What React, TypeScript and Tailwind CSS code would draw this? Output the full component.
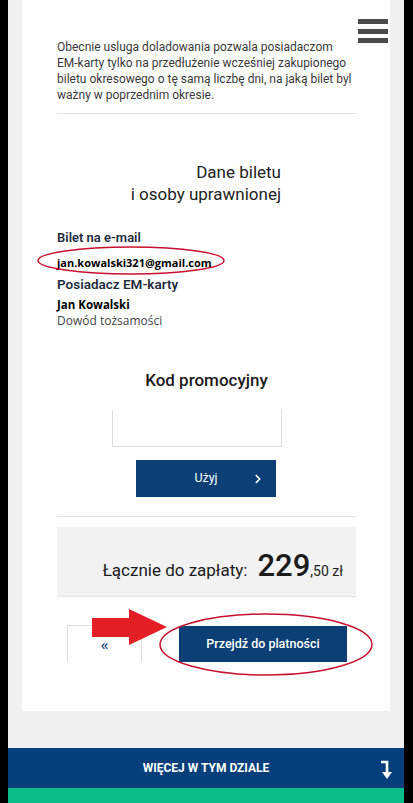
import { ChevronRight } from "lucide-react";

const roboto = "font-['Roboto',sans-serif]";
const openSans = "font-['Open_Sans',sans-serif]";

function Hamburger() {
  return (
    <div className="absolute right-[2px] top-[19px] flex flex-col gap-[4.5px]">
      <span className="block h-[5px] w-[30px] bg-[#4a4a4a]" />
      <span className="block h-[5px] w-[30px] bg-[#4a4a4a]" />
      <span className="block h-[5px] w-[30px] bg-[#4a4a4a]" />
    </div>
  );
}

function TicketDetails() {
  return (
    <div className="flex flex-col">
      <div className={`${roboto} mt-[23px] text-[13px] font-semibold leading-[20px] text-[#1f2d3d]`}>
        Bilet na e-mail
      </div>
      <div className={`${openSans} mt-[5px] text-[11px] font-bold leading-[20px] text-black`}>
        jan.kowalski321@gmail.com
      </div>
      <div className={`${roboto} mt-[1px] text-[13.5px] font-semibold leading-[20px] text-[#1f2d3d]`}>
        Posiadacz EM-karty
      </div>
      <div className={`${openSans} mt-[3px] text-[11.5px] font-bold leading-[16px] text-black`}>
        Jan Kowalski
      </div>
      <div className={`${openSans} text-[12px] leading-[16px] text-[#444]`}>
        Dowód tożsamości
      </div>
    </div>
  );
}

function PromoCode() {
  return (
    <div className="flex flex-col">
      <h3 className={`${roboto} mt-[40px] text-center text-[17px] font-medium leading-[22px] text-[#1b1b1b]`}>
        Kod promocyjny
      </h3>
      <input
        className="ml-[55px] mt-[19px] h-[37px] w-[170px] border border-t-0 border-[#dcdcdc] bg-white outline-none"
        aria-label="Kod promocyjny"
      />
      <button className={`${roboto} relative ml-[79px] mt-[13px] flex h-[37px] w-[140px] items-center justify-center bg-[#0b3f75] text-[12.5px] text-white`}>
        Użyj
        <ChevronRight className="absolute right-[11px] top-1/2 -translate-y-1/2" size={14} strokeWidth={3} />
      </button>
    </div>
  );
}

function Total() {
  return (
    <div className={`${roboto} mt-[10px] flex h-[70px] items-baseline justify-end border-b border-[#e2e2e2] bg-[#f2f2f2] pr-[13px] pt-[19px] text-[#1b1b1b]`}>
      <span className="mr-[10px] text-[17px]">Łącznie do zapłaty:</span>
      <span className="text-[31px] font-medium leading-[40px]">229</span>
      <span className="text-[14px]">,50 zł</span>
    </div>
  );
}

function Annotations() {
  return (
    <svg className="pointer-events-none absolute left-0 top-0" width="413" height="803" viewBox="0 0 413 803">
      <ellipse cx="131" cy="260.5" rx="93" ry="13.5" fill="none" stroke="#c8102e" strokeWidth="1.5" />
      <ellipse cx="266" cy="644.5" rx="106" ry="30.5" fill="none" stroke="#c8102e" strokeWidth="1.5" />
      <polygon points="92,618 129,618 129,609 167,627 129,645 129,637 92,637" fill="#e31e24" />
    </svg>
  );
}

export default function App() {
  return (
    <div className="relative flex h-[803px] w-[413px] overflow-hidden bg-black">
      <div className="ml-[8px] flex w-[396px] flex-col bg-[#f0f0f0]">
        <div className="relative mx-[14px] flex h-[711px] flex-col bg-white pl-[35px] pr-[34px] pt-[39px]">
          <Hamburger />

          <p className={`${roboto} text-[12px] leading-[16px] text-[#3a3a3a]`}>
            Obecnie usluga doladowania pozwala posiadaczom EM-karty tylko na przedłużenie wcześniej zakupionego biletu okresowego o tę samą liczbę dni, na jaką bilet byl ważny w poprzednim okresie.
          </p>
          <div className="mt-[10px] h-px bg-[#e2e2e2]" />

          <h2 className={`${roboto} mt-[47px] w-[224px] text-right text-[17px] leading-[22px] text-[#222]`}>
            Dane biletu
            <br />i osoby uprawnionej
          </h2>

          <TicketDetails />
          <PromoCode />

          <div className="mt-[19px] h-px bg-[#e2e2e2]" />
          <Total />

          <div className="mt-[28px] flex items-start">
            <button className="ml-[10px] flex h-[37px] w-[75px] items-center justify-center border border-b-0 border-[#dcdcdc] bg-white text-[15px] text-[#0b3f75]">
              «
            </button>
            <button className={`${roboto} ml-[37px] mt-px h-[36px] w-[168px] bg-[#0b3f75] text-[12.5px] font-medium text-white`}>
              Przejdź do platności
            </button>
          </div>
        </div>

        <div className="h-[37px]" />

        <div className={`${roboto} relative flex h-[40px] items-center justify-center bg-[#063f7b] text-[12px] font-bold text-white`}>
          WIĘCEJ W TYM DZIALE
          <svg className="absolute right-[11px] top-[12px]" width="14" height="20" viewBox="0 0 14 20">
            <path d="M2 2 H8 V13" fill="none" stroke="white" strokeWidth="2.6" />
            <polygon points="3,12 13,12 8,19" fill="white" />
          </svg>
        </div>
        <div className="h-[15px] bg-[#0bbd88]" />
      </div>
      <Annotations />
    </div>
  );
}
